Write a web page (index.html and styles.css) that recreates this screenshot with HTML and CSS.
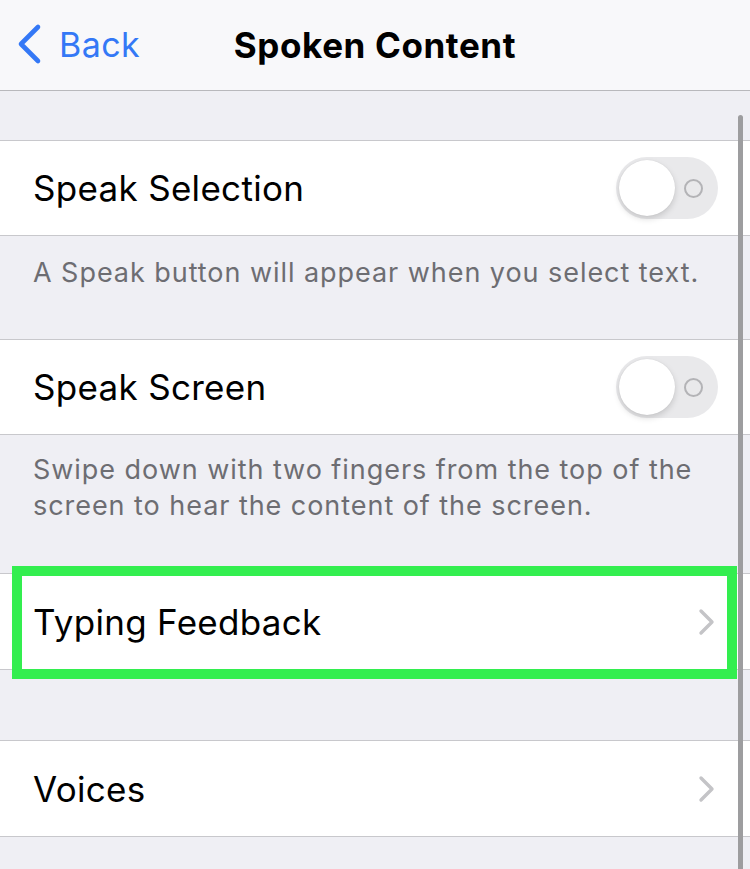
FILE: index.html
```html
<!DOCTYPE html>
<html>
<head>
<meta charset="utf-8">
<link rel="stylesheet" href="styles.css">
</head>
<body>
<div class="screen">
  <header class="nav">
    <div class="back">
      <svg class="back-chev" width="30" height="44" viewBox="0 0 30 44"><polyline points="22,4 5,21 22,38" fill="none" stroke="#3478f6" stroke-width="4.6" stroke-linecap="round" stroke-linejoin="round"/></svg>
      <span class="back-label">Back</span>
    </div>
    <div class="title">Spoken Content</div>
  </header>

  <div class="gap-top"></div>

  <section class="group">
    <div class="row">
      <span class="label">Speak Selection</span>
      <span class="toggle"><span class="knob"></span><span class="off-mark"></span></span>
    </div>
  </section>
  <p class="footer footer-one">A Speak button will appear when you select text.</p>

  <section class="group">
    <div class="row">
      <span class="label">Speak Screen</span>
      <span class="toggle"><span class="knob"></span><span class="off-mark"></span></span>
    </div>
  </section>
  <p class="footer footer-two">Swipe down with two fingers from the top of the screen to hear the content of the screen.</p>

  <section class="group">
    <div class="row row-link">
      <span class="label">Typing Feedback</span>
      <svg class="chev" width="18" height="28" viewBox="0 0 18 28"><polyline points="3,3 14,14 3,25" fill="none" stroke="#c4c4c7" stroke-width="3.4" stroke-linecap="round" stroke-linejoin="round"/></svg>
    </div>
  </section>

  <div class="gap-mid"></div>

  <section class="group">
    <div class="row row-link">
      <span class="label">Voices</span>
      <svg class="chev" width="18" height="28" viewBox="0 0 18 28"><polyline points="3,3 14,14 3,25" fill="none" stroke="#c4c4c7" stroke-width="3.4" stroke-linecap="round" stroke-linejoin="round"/></svg>
    </div>
  </section>

  <div class="highlight"></div>
  <div class="scrollbar"></div>
</div>
</body>
</html>
```

FILE: styles.css
```css
html, body {
  margin: 0;
  padding: 0;
}
body {
  background: #efeff4;
  font-family: Inter, "Liberation Sans", Arial, sans-serif;
  color: #000;
}
.screen {
  position: relative;
  width: 750px;
  height: 869px;
  overflow: hidden;
  background: #efeff4;
}
.nav {
  position: relative;
  height: 90px;
  background: #f8f8fa;
  border-bottom: 1px solid #b8b8bc;
  display: flex;
  align-items: center;
  justify-content: center;
}
.back {
  position: absolute;
  left: 16px;
  top: 23px;
  display: flex;
  align-items: center;
  gap: 13px;
}
.back-label {
  color: #3478f6;
  font-size: 34px;
  letter-spacing: 0.4px;
  line-height: 44px;
}
.title {
  font-size: 35px;
  font-weight: 700;
  letter-spacing: 0.6px;
  line-height: 44px;
}
.gap-top {
  height: 49px;
}
.group {
  background: #fff;
  border-top: 1px solid #c8c8cc;
  border-bottom: 1px solid #c8c8cc;
}
.row {
  height: 94px;
  display: flex;
  align-items: center;
  justify-content: space-between;
  padding: 0 32px 0 33px;
}
.row-link {
  height: 95px;
  padding-right: 34px;
}
.label {
  font-size: 35px;
  letter-spacing: 0.3px;
}
.toggle {
  position: relative;
  width: 102px;
  height: 62px;
  border-radius: 31px;
  background: #e9e9eb;
  display: flex;
  align-items: center;
}
.knob {
  position: absolute;
  left: 3px;
  top: 3px;
  width: 56px;
  height: 56px;
  border-radius: 50%;
  background: #fff;
  box-shadow: 0 3px 6px rgba(0,0,0,0.15), 0 0 1px rgba(0,0,0,0.12);
}
.off-mark {
  position: absolute;
  left: 68px;
  top: 22px;
  width: 15px;
  height: 15px;
  border: 2px solid #b3b3b6;
  border-radius: 50%;
}
.footer {
  margin: 0;
  color: #6d6d72;
  font-size: 27px;
  line-height: 36px;
  letter-spacing: 0.95px;
  padding: 0 40px 0 33px;
}
.footer-one {
  height: 103px;
  padding-top: 19px;
  box-sizing: border-box;
}
.footer-two {
  height: 138px;
  padding-top: 17px;
  box-sizing: border-box;
}
.gap-mid {
  height: 70px;
}
.highlight {
  position: absolute;
  left: 12px;
  top: 566px;
  width: 725px;
  height: 113px;
  box-sizing: border-box;
  border: 10px solid #33ee4f;
}
.scrollbar {
  position: absolute;
  left: 738px;
  top: 115px;
  width: 5px;
  height: 760px;
  border-radius: 3px;
  background: #9d9d9f;
}
```
